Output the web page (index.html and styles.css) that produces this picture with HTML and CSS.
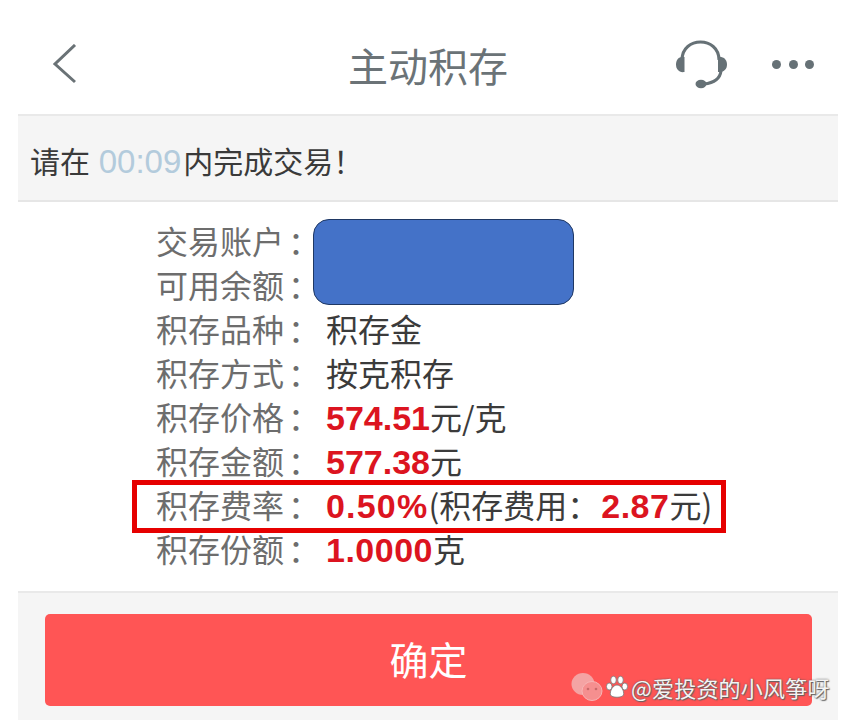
FILE: index.html
```html
<!DOCTYPE html>
<html lang="zh">
<head>
<meta charset="utf-8">
<title>主动积存</title>
<link rel="stylesheet" href="styles.css">
</head>
<body>
<div class="page">
  <header class="nav">
    <svg class="back" width="26" height="42" viewBox="0 0 26 42"><path d="M23 1 L3 20 L23 38" fill="none" stroke="#6a7276" stroke-width="3"/></svg>
    <h1 class="title">主动积存</h1>
    <svg class="headset" width="54" height="54" viewBox="0 0 54 54">
      <path d="M7 22 C7 -2 44 -2 44 22" fill="none" stroke="#667176" stroke-width="3"/>
      <path d="M46 33 C45 41 38 45 29 46" fill="none" stroke="#667176" stroke-width="3"/>
      <path d="M9.500 19 L9.500 34 C4 35 1 31 1 26.500 C1 22 4 18 9.500 19Z" fill="#667176"/>
      <path d="M43 19 L43 34 C48.500 35 52 31 52 26.500 C52 22 48.500 18 43 19Z" fill="#667176"/>
      <ellipse cx="26" cy="46" rx="5.500" ry="4.200" fill="#667176"/>
    </svg>
    <div class="more"><i></i><i></i><i></i></div>
  </header>
  <main class="sheet">
    <div class="notice">请在 <span class="timer">00:09</span>内完成交易！</div>
    <section class="rows">
      <div class="row"><span class="label">交易账户<span class="colon">：</span></span></div>
      <div class="row"><span class="label">可用余额<span class="colon">：</span></span></div>
      <div class="mask"></div>
      <div class="row"><span class="label">积存品种<span class="colon">：</span></span><span class="value">积存金</span></div>
      <div class="row"><span class="label">积存方式<span class="colon">：</span></span><span class="value">按克积存</span></div>
      <div class="row"><span class="label">积存价格<span class="colon">：</span></span><span class="value"><b>574.51</b>元/克</span></div>
      <div class="row"><span class="label">积存金额<span class="colon">：</span></span><span class="value"><b>577.38</b>元</span></div>
      <div class="row"><span class="label">积存费率<span class="colon">：</span></span><span class="value"><b class="pct">0.50%</b>(积存费用：<b class="fee">2.87</b>元)</span><div class="highlight"></div></div>
      <div class="row"><span class="label">积存份额<span class="colon">：</span></span><span class="value"><b class="qty">1.0000</b>克</span></div>
    </section>
    <footer class="foot"><button class="confirm">确定</button></footer>
  </main>
  <div class="mark">
    <svg class="wechat" width="32" height="30" viewBox="0 0 32 30"><ellipse cx="12" cy="12" rx="11.500" ry="11" fill="#f4a3a3"/><ellipse cx="21" cy="19" rx="10" ry="9.500" fill="#f58f8f" stroke="#f7b5b5"/><circle cx="17" cy="17" r="1.300" fill="#c96a6a"/><circle cx="25" cy="17" r="1.300" fill="#c96a6a"/></svg>
    <svg class="paw" width="22" height="24" viewBox="0 0 22 24" fill="#fff" stroke="#777" stroke-width=".8"><ellipse cx="7.500" cy="5" rx="2.800" ry="3.800"/><ellipse cx="14.500" cy="5" rx="2.800" ry="3.800"/><ellipse cx="3.200" cy="11.500" rx="2.800" ry="3.500"/><ellipse cx="18.800" cy="11.500" rx="2.800" ry="3.500"/><path d="M11 10 C7 10 3.500 16 4.500 20 C6 23 16 23 17.500 20 C18.500 16 15 10 11 10Z"/></svg>
    <span class="handle">@爱投资的小风筝呀</span>
  </div>
</div>
</body>
</html>
```
FILE: styles.css
```css
* { box-sizing: border-box; }
html, body { margin: 0; padding: 0; background: #fff; }
body { font-family: "Noto Sans CJK SC", "Liberation Sans", sans-serif; }
.page { position: relative; width: 848px; height: 720px; overflow: hidden; }
.nav { height: 114px; position: relative; display: flex; align-items: center; justify-content: center; padding-left: 8px; }
.back { position: absolute; left: 52px; top: 44px; }
.title { margin: 0; font-size: 40px; font-weight: 400; color: #6b7377; line-height: 1; position: relative; top: 8px; }
.headset { position: absolute; left: 675px; top: 38px; }
.more { position: absolute; left: 772px; top: 60px; display: flex; gap: 7.500px; }
.more i { display: block; width: 9px; height: 9px; border-radius: 50%; background: #667176; }
.sheet { margin: 0 10px 0 18px; }
.notice { height: 88px; background: #f5f5f5; border-top: 2px solid #e9e9e9; border-bottom: 2px solid #e6e6e6; padding-left: 12px; font-size: 30px; line-height: 88px; color: #3a3a3a; white-space: nowrap; }
.timer { color: #b3cbdc; font-family: "Liberation Sans", sans-serif; font-size: 33px; margin-left: 2px; margin-right: 2px; }
.rows { position: relative; padding: 16px 0 19px 138px; height: 389px; }
.row { position: relative; display: flex; height: 44px; align-items: center; white-space: nowrap; font-size: 32px; }
.label { width: 170px; flex: none; color: #6d6d6d; }
.colon { font-family: "Noto Sans CJK TC", sans-serif; margin-left: 4px; }
.value { color: #3b3b3b; font-size: 32px; }
.value b { color: #dc1420; font-family: "Liberation Sans", sans-serif; font-size: 34px; font-weight: 700; }
.value .pct { letter-spacing: 1.200px; }
.value .fee { letter-spacing: .5px; margin-left: 2px; }
.value .qty { letter-spacing: .5px; }
.mask { position: absolute; left: 295px; top: 17px; width: 261px; height: 86px; background: #4472c8; border: 1px solid #1f3864; border-radius: 16px; }
.highlight { position: absolute; left: -24px; top: -2px; width: 594px; height: 53px; border: 5px solid #e60000; }
.foot { background: #f5f5f5; border-top: 2px solid #e9e9e9; height: 129px; padding: 21px 26px 0 27px; }
.confirm { display: block; width: 100%; height: 92px; border: 0; border-radius: 5px; background: #ff5555; color: #fff; font-family: inherit; font-size: 39px; padding: 0 0 4px; }
.mark { position: absolute; left: 571px; top: 672px; display: flex; align-items: center; gap: 3px; }
.handle { color: #f4f4f4; font-size: 22px; line-height: 28px; letter-spacing: .2px; text-shadow: 0 0 2px #555, 1px 1px 1px #666; white-space: nowrap; }
.paw { flex: none; }
.wechat { flex: none; }
```
